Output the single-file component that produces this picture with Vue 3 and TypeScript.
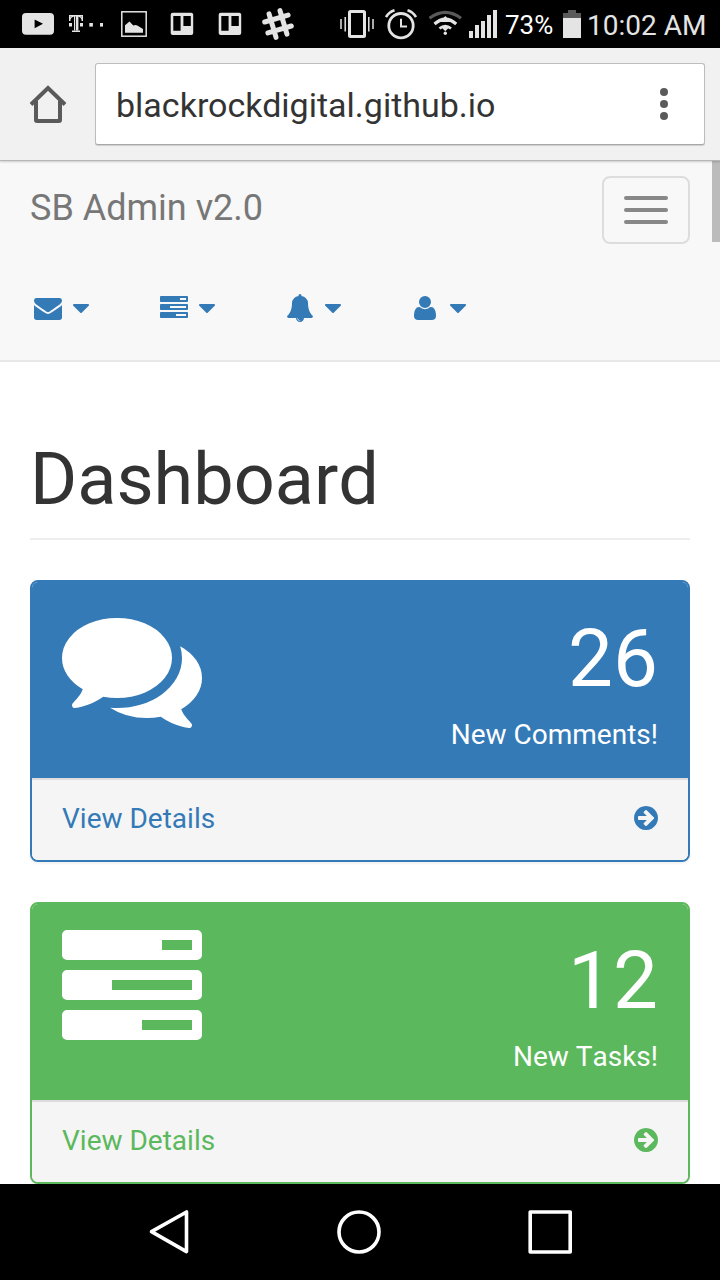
<script setup lang="ts">
interface Panel {
  tone: 'primary' | 'green'
  icon: string
  count: number
  label: string
}

const tasksIcon =
  'M1024 1408h640v-128h-640v128zm-384-512h1024v-128h-1024v128zm640-512h384v-128h-384v128zm512 832v256q0 26-19 45t-45 19h-1664q-26 0-45-19t-19-45v-256q0-26 19-45t45-19h1664q26 0 45 19t19 45zm0-512v256q0 26-19 45t-45 19h-1664q-26 0-45-19t-19-45v-256q0-26 19-45t45-19h1664q26 0 45 19t19 45zm0-512v256q0 26-19 45t-45 19h-1664q-26 0-45-19t-19-45v-256q0-26 19-45t45-19h1664q26 0 45 19t19 45z'
const commentsIcon =
  'M1408 768q0 139-94 257t-256.5 186.500-353.500 68.500q-86 0-176-16-124 88-278 128-36 9-86 16h-3q-11 0-20.500-8t-11.500-21q-1-3-1-6.500t.5-6.500 2-6l2.500-5t3.500-5.500 4-5 4.500-5 4-4.500q5-6 23-25t26-29.500 22.500-29 25-38.500 20.500-44q-124-72-195-177t-71-224q0-139 94-257t256.500-186.500 353.500-68.500 353.500 68.500 256.500 186.500 94 257zm384 256q0 120-71 224.500t-195 176.500q10 24 20.500 44t25 38.500 22.500 29 26 29.500 23 25q1 1 4 4.500t4.500 5 4 5 3.500 5.500l2.500 5t2 6 .5 6.500-1 6.500q-3 14-13 22t-22 7q-50-7-86-16-154-40-278-128-90 16-176 16-271 0-472-132 58 4 88 4 161 0 309-45t264-129q125-92 192-212t67-254q0-77-23-152 129 71 204 178t75 230z'
const envelopeIcon =
  'M1792 710v794q0 66-47 113t-113 47h-1472q-66 0-113-47t-47-113v-794q44 49 101 87 362 246 497 345 57 42 92.500 65.500t94.500 48 110 24.500h2q51 0 110-24.500t94.500-48 92.500-65.500q170-123 498-345 57-39 100-87zm0-294q0 79-49 151t-122 123q-376 261-468 325-10 7-42.500 31t-54 38.500-52 32.500-57.500 27-50 9h-2q-23 0-50-9t-57.500-27-52-32.500-54-38.500-42.500-31q-91-64-262-182.500t-205-142.500q-62-42-117-115.500t-55-136.500q0-78 41.500-130t118.500-52h1472q65 0 112.500 47t47.500 113z'
const bellIcon =
  'M912 1696q0-16-16-16-59 0-101.500-42.500t-42.500-101.500q0-16-16-16t-16 16q0 73 51.500 124.500t124.500 51.500q16 0 16-16zm816-288q0 52-38 90t-90 38h-448q0 106-75 181t-181 75-181-75-75-181h-448q-52 0-90-38t-38-90q50-42 91-88t85-119.500 74.500-158.500 50-206 19.500-260q0-152 117-282.500t307-158.500q-8-19-8-39 0-40 28-68t68-28 68 28 28 68q0 20-8 39 190 28 307 158.500t117 282.500q0 139 19.500 260t50 206 74.500 158.500 85 119.500 91 88z'
const userIcon =
  'M1600 1405q0 120-73 189.500t-194 69.500h-874q-121 0-194-69.500t-73-189.500q0-53 3.500-103.500t14-109 26.500-108.500 43-97.500 62-81 85.500-53.500 111.500-20q9 0 42 21.500t74.500 48 108 48 133.500 21.500 133.500-21.500 108-48 74.500-48 42-21.500q61 0 111.500 20t85.500 53.500 62 81 43 97.500 26.500 108.500 14 109 3.500 103.500zm-320-893q0 159-112.500 271.500t-271.500 112.500-271.500-112.500-112.500-271.500 112.500-271.500 271.500-112.500 271.500 112.500 112.500 271.500z'
const caretIcon =
  'M1408 704q0 26-19 45l-448 448q-19 19-45 19t-45-19l-448-448q-19-19-19-45t19-45 45-19h896q26 0 45 19t19 45z'
const arrowIcon =
  'M1413 896q0-27-18-45l-91-91-362-362q-18-18-45-18t-45 18l-91 91q-18 18-18 45t18 45l189 189h-502q-26 0-45 19t-19 45v128q0 26 19 45t45 19h502l-189 189q-19 19-19 45t19 45l91 91q18 18 45 18t45-18l362-362 91-91q18-18 18-45zm251 0q0 209-103 385.500t-279.500 279.500-385.500 103-385.500-103-279.500-279.500-103-385.500 103-385.500 279.500-279.500 385.500-103 385.500 103 279.500 279.500 103 385.500z'

const menus: string[] = [envelopeIcon, tasksIcon, bellIcon, userIcon]

const panels: Panel[] = [
  { tone: 'primary', icon: commentsIcon, count: 26, label: 'New Comments!' },
  { tone: 'green', icon: tasksIcon, count: 12, label: 'New Tasks!' },
]
</script>

<template>
  <div class="phone">
    <header class="status">
      <div class="notices">
        <svg viewBox="0 0 48 48">
          <rect x="8" y="13" width="32" height="21.8" rx="4" />
          <path d="M20.600 19.500L29 23.800L20.600 28.200Z" fill="#000" />
        </svg>
        <svg viewBox="0 0 48 48">
          <rect x="7" y="15" width="14" height="1.500" />
          <rect x="7" y="15" width="1.500" height="6" />
          <rect x="19.500" y="15" width="1.500" height="6" />
          <path d="M8 19Q9 16.500 11.500 16.200M20 19Q19 16.500 16.500 16.200" class="line" stroke-width="1.200" />
          <rect x="12" y="15.500" width="1.200" height="15" />
          <rect x="14" y="15.500" width="2.400" height="15" />
          <rect x="10" y="30.500" width="8" height="1.500" />
          <rect x="7" y="23" width="3" height="3.500" />
          <rect x="18" y="23" width="3" height="3.500" />
          <rect x="27.300" y="23" width="3.600" height="3.600" />
          <rect x="38" y="23" width="3" height="3.600" />
        </svg>
        <svg viewBox="0 0 48 48">
          <rect x="11.800" y="11.800" width="24.400" height="24.400" class="line" stroke-width="1.500" />
          <path d="M15 32.800V25.300L19.500 21.500L23.300 25.600L25.500 25L27.300 25.500L33 29V32.800Z" />
        </svg>
        <svg v-for="n in 2" :key="n" viewBox="0 0 48 48">
          <rect x="12.700" y="12.700" width="22.500" height="22.400" rx="2" />
          <path d="M15.300 16h7.300v14.700h-7.300zM25.400 16h7.400v10h-7.400z" fill="#000" />
        </svg>
        <svg viewBox="0 0 48 48">
          <g class="line" stroke-width="5" stroke-linecap="round" transform="rotate(-16.500 24 24)">
            <path d="M18.300 11.800V36.200M29.700 11.800V36.200M11.800 18.300H36.200M11.800 29.700H36.200" />
          </g>
        </svg>
      </div>
      <div class="system">
        <svg class="vibrate" viewBox="340 0 34 48">
          <rect x="349.500" y="11.500" width="15" height="25" rx="1" class="line" stroke-width="3" />
          <path d="M341 19v10M345.200 17v14.500M368.800 17v14.500M373 19v10" class="line" stroke-width="1.500" />
        </svg>
        <svg class="alarm" viewBox="385 0 32 48">
          <circle cx="401" cy="25.700" r="12.200" class="line" stroke-width="2.800" />
          <path d="M401 18.800V26.600H407" class="line" stroke-width="2" />
          <path d="M386 17Q389 12 394.500 10.300M416 17Q413 12 407.500 10.300" class="line" stroke-width="2.600" />
        </svg>
        <svg class="wifi" viewBox="428 0 34 48">
          <path d="M429.500 18.300Q445.300 6.500 461 18.300" class="line dim" stroke-width="3.200" />
          <path d="M434.500 24Q445.300 14.500 456.200 24" class="line" stroke-width="3.200" />
          <path d="M439.500 28.500Q445.300 23.800 451 28.500" class="line" stroke-width="2.800" />
          <path d="M445.300 16L451 22H439.600ZM440.500 26.500H450L445.300 31.200Z" />
          <circle cx="445.300" cy="33.300" r="1.700" />
        </svg>
        <svg class="signal" viewBox="469 0 28 48">
          <path d="M469 31h4v7h-4zM475 25h4v13h-4zM481 21h4v17h-4zM487 15h4v23h-4zM493 10h4v28h-4z" />
        </svg>
        <span class="percent">73%</span>
        <svg class="battery" viewBox="563 0 18 48">
          <path d="M568 10h8v3h5v6h-18v-6h5z" fill="#5a5a5a" />
          <rect x="563" y="18" width="18" height="20" />
        </svg>
        <span class="clock">10:02 AM</span>
      </div>
    </header>

    <div class="toolbar">
      <svg class="home" viewBox="0 0 40 40">
        <path d="M3 20.500L20 4L37 20.500M8 17V36Q8 37 9 37H31Q32 37 32 36V17" />
      </svg>
      <div class="address">
        <span>blackrockdigital.github.io</span>
        <svg class="more" viewBox="0 0 8 32">
          <circle cx="4" cy="4" r="4" />
          <circle cx="4" cy="16" r="4" />
          <circle cx="4" cy="28" r="4" />
        </svg>
      </div>
    </div>

    <main class="page">
      <i class="scrollbar"></i>
      <nav class="navbar">
        <div class="brand-row">
          <a class="brand">SB Admin v2.0</a>
          <button class="toggle" type="button" aria-label="Menu"><i></i><i></i><i></i></button>
        </div>
        <ul class="menus">
          <li v-for="(icon, i) in menus" :key="i">
            <svg class="menu-icon" viewBox="0 0 1792 1792"><path :d="icon" /></svg>
            <svg class="caret" viewBox="384 0 1024 1792"><path :d="caretIcon" /></svg>
          </li>
        </ul>
      </nav>
      <div class="content">
        <h1>Dashboard</h1>
        <section v-for="panel in panels" :key="panel.label" class="panel" :class="panel.tone">
          <div class="heading">
            <svg class="big-icon" viewBox="0 0 1792 1792"><path :d="panel.icon" /></svg>
            <div class="figures">
              <div class="huge">{{ panel.count }}</div>
              <div class="label">{{ panel.label }}</div>
            </div>
          </div>
          <a class="footer">
            <span>View Details</span>
            <svg viewBox="0 0 1792 1792"><path :d="arrowIcon" /></svg>
          </a>
        </section>
      </div>
    </main>

    <footer class="keys">
      <svg viewBox="0 0 48 48"><path d="M6.500 23.600L41.500 4V43.600Z" /></svg>
      <svg viewBox="0 0 48 48"><circle cx="23" cy="24" r="20" /></svg>
      <svg viewBox="0 0 48 48"><rect x="3.200" y="4" width="40" height="40" /></svg>
    </footer>
  </div>
</template>

<style>
body {
  margin: 0;
  overflow: hidden;
}
</style>

<style scoped>
.phone {
  display: flex;
  flex-direction: column;
  width: 720px;
  height: 1280px;
  overflow: hidden;
  background: #fff;
  color: #333;
  font-family: Roboto, "Liberation Sans", sans-serif;
  font-size: 28px;
  line-height: 40px;
}
svg {
  display: block;
  flex: none;
}
.status {
  display: flex;
  flex: none;
  height: 48px;
  background: #000;
  color: #e4e4e4;
  fill: #e4e4e4;
}
.line {
  fill: none;
  stroke: #e4e4e4;
}
.line.dim {
  stroke: #5a5a5a;
}
.notices {
  display: flex;
  width: 288px;
  padding-left: 14px;
}
.notices svg {
  width: 48px;
  height: 48px;
}
.system {
  display: flex;
  padding-left: 38px;
  line-height: 48px;
  white-space: nowrap;
}
.system svg {
  height: 48px;
}
.system .vibrate { width: 34px; }
.system .alarm { width: 32px; margin-left: 11px; }
.system .wifi { width: 34px; margin-left: 11px; }
.system .signal { width: 28px; margin-left: 7px; }
.system .battery { width: 18px; }
.percent {
  width: 58px;
  margin-left: 8px;
  box-sizing: border-box;
  padding-right: 8px;
  padding-top: 1px;
  color: #fff;
  font-size: 26px;
}
.clock {
  margin-left: 6px;
  padding-top: 2px;
}
.toolbar {
  position: relative;
  z-index: 1;
  display: flex;
  flex: none;
  align-items: flex-start;
  box-sizing: border-box;
  height: 113px;
  padding: 15px 15px 0 28px;
  border-bottom: 1px solid #b6b6b6;
  background: #f1f1f1;
  box-shadow: 0 1px 2px rgba(0, 0, 0, 0.18);
}
.home {
  width: 40px;
  height: 40px;
  margin: 21px 27px 0 0;
  fill: none;
  stroke: #5a5a5a;
  stroke-width: 4;
}
.address {
  display: flex;
  flex: 1;
  align-items: center;
  justify-content: space-between;
  box-sizing: border-box;
  height: 82px;
  padding: 0 36px 0 20px;
  border: 1px solid #bdbdbd;
  border-bottom-color: #a8a8a8;
  border-radius: 3px;
  background: #fff;
  box-shadow: 0 1px 1px rgba(0, 0, 0, 0.14);
  font-size: 34px;
}
.address span {
  padding-top: 2px;
}
.more {
  width: 8px;
  height: 32px;
  fill: #5a5a5a;
}
.page {
  position: relative;
  flex: 1;
  min-height: 0;
  margin-top: -1px;
}
.scrollbar {
  position: absolute;
  top: 0;
  right: 0;
  width: 8px;
  height: 82px;
  background: #bbb;
}
.navbar {
  box-sizing: border-box;
  height: 202px;
  padding: 16px 30px 0;
  border-bottom: 2px solid #e7e7e7;
  background: #f8f8f8;
}
.brand-row {
  display: flex;
  justify-content: space-between;
}
.brand {
  padding-top: 12px;
  color: #777;
  font-size: 36px;
}
.toggle {
  display: flex;
  flex-direction: column;
  justify-content: center;
  gap: 8px;
  box-sizing: border-box;
  width: 88px;
  height: 68px;
  padding: 0 20px;
  border: 2px solid #ddd;
  border-radius: 8px;
  background: transparent;
}
.toggle i {
  height: 4px;
  border-radius: 2px;
  background: #888;
}
.menus {
  display: flex;
  gap: 70.800px;
  margin: 50px 0 0 4px;
  padding: 0;
  list-style: none;
  fill: #337ab7;
}
.menus li {
  display: flex;
  gap: 11px;
}
.menu-icon {
  width: 28px;
  height: 28px;
}
.caret {
  width: 16px;
  height: 28px;
}
.content {
  padding: 78px 30px 0;
}
h1 {
  box-sizing: border-box;
  height: 100px;
  margin: 0 0 40px;
  border-bottom: 2px solid #eee;
  font-size: 72px;
  font-weight: 400;
  font-kerning: none;
  line-height: 79px;
}
.panel {
  box-sizing: border-box;
  height: 282px;
  margin-bottom: 40px;
  border: 2px solid var(--tone);
  border-radius: 8px;
  background: #fff;
  box-shadow: 0 2px 2px rgba(0, 0, 0, 0.05);
}
.primary { --tone: #337ab7; }
.green { --tone: #5cb85c; }
.heading {
  display: flex;
  justify-content: space-between;
  box-sizing: border-box;
  height: 196px;
  padding: 16px 30px 0;
  border-radius: 6px 6px 0 0;
  background: var(--tone);
  color: #fff;
  fill: #fff;
}
.big-icon {
  width: 140px;
  height: 140px;
}
.figures {
  padding-top: 21px;
  text-align: right;
}
.huge {
  font-size: 80px;
  line-height: 80px;
}
.label {
  padding-top: 16px;
  font-kerning: none;
}
.footer {
  display: flex;
  align-items: flex-start;
  justify-content: space-between;
  box-sizing: border-box;
  height: 82px;
  padding: 19px 28px 0 30px;
  border-top: 2px solid #ddd;
  border-radius: 0 0 6px 6px;
  background: #f5f5f5;
  color: var(--tone);
  fill: var(--tone);
}
.footer svg {
  width: 28px;
  height: 28px;
  margin-top: 5px;
}
.keys {
  position: relative;
  z-index: 1;
  display: grid;
  flex: none;
  grid-template-columns: repeat(3, 1fr);
  align-items: center;
  justify-items: center;
  box-sizing: border-box;
  height: 96px;
  padding: 0 74px;
  background: #000;
}
.keys svg {
  width: 48px;
  height: 48px;
  fill: none;
  stroke: #fff;
  stroke-width: 3.600px;
  stroke-linejoin: round;
}
</style>
